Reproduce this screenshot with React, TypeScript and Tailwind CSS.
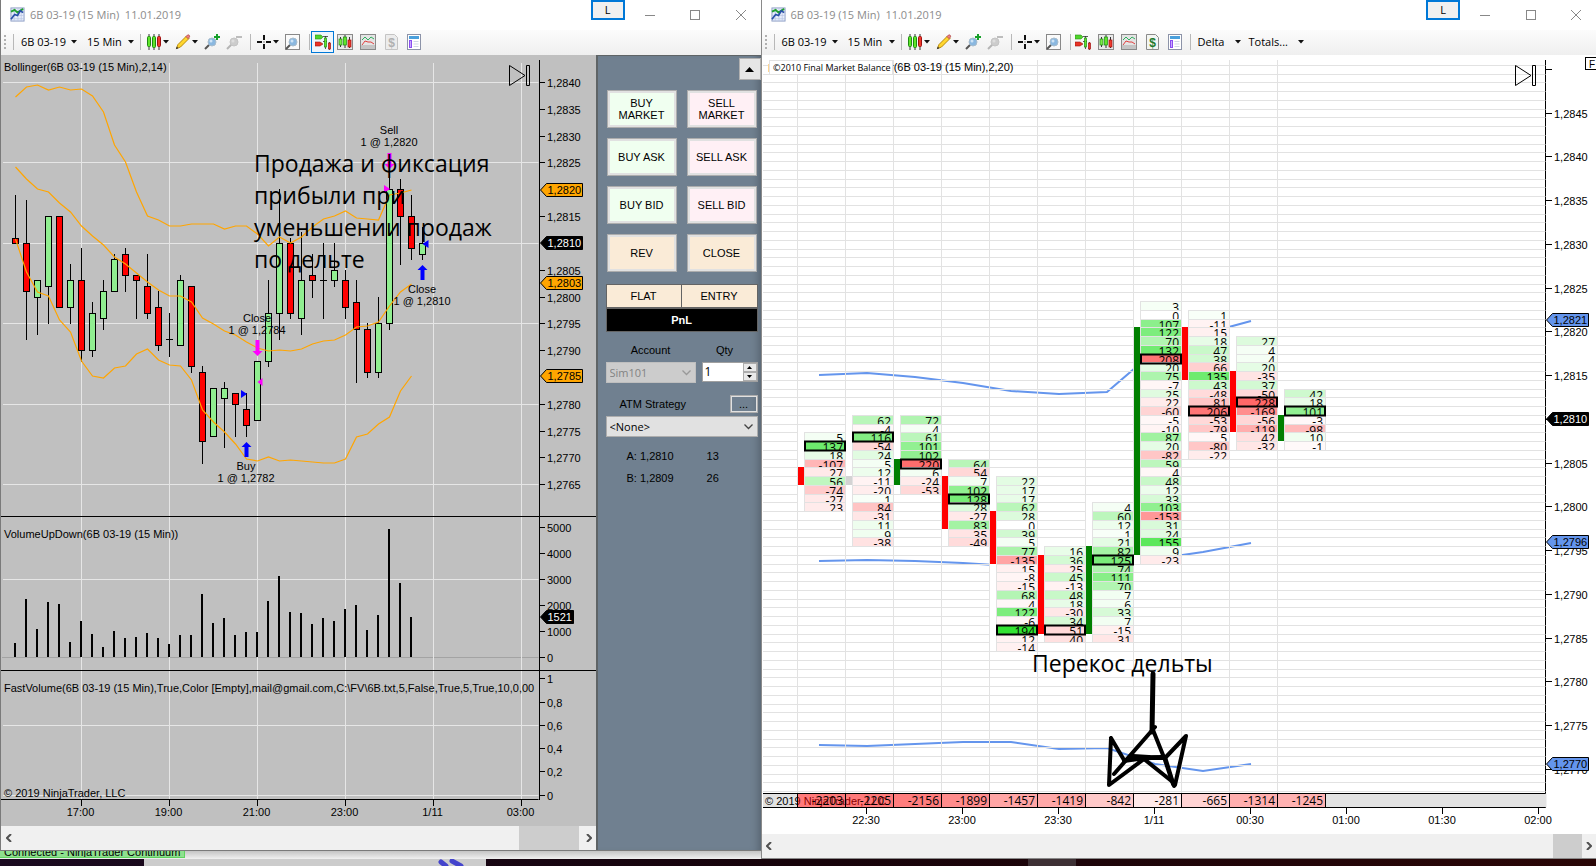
import type { ReactNode } from 'react'

const UI = "font-['Open_Sans','Noto_Sans',sans-serif]"

// [high, top, bottom, low, kind] in ticks (1,2840 = 2840)
type Candle = [number, number, number, number, 'g' | 'r']
const candles: Candle[] = [
  [2819, 2811, 2810, 2810, 'r'],
  [2818, 2810, 2801, 2792, 'r'],
  [2803, 2803, 2800, 2793, 'g'],
  [2815, 2815, 2802, 2795, 'g'],
  [2815, 2815, 2798, 2798, 'r'],
  [2806, 2803, 2798, 2795, 'g'],
  [2809, 2803, 2790, 2788, 'r'],
  [2799, 2797, 2790, 2789, 'g'],
  [2803, 2801, 2796, 2794, 'g'],
  [2808, 2807, 2801, 2801, 'g'],
  [2809, 2808, 2804, 2801, 'r'],
  [2804, 2804, 2803, 2796, 'r'],
  [2808, 2802, 2797, 2796, 'r'],
  [2801, 2798, 2791, 2790, 'r'],
  [2797, 2792, 2792, 2789, 'g'],
  [2804, 2803, 2791, 2791, 'g'],
  [2802, 2802, 2787, 2786, 'r'],
  [2787, 2786, 2773, 2769, 'r'],
  [2783, 2783, 2774, 2774, 'g'],
  [2784, 2783, 2781, 2772, 'g'],
  [2782, 2782, 2780, 2774, 'r'],
  [2782, 2779, 2776, 2774, 'r'],
  [2788, 2788, 2777, 2777, 'g'],
  [2803, 2797, 2788, 2787, 'g'],
  [2820, 2810, 2797, 2792, 'g'],
  [2811, 2810, 2797, 2796, 'r'],
  [2812, 2803, 2796, 2793, 'g'],
  [2808, 2804, 2803, 2800, 'r'],
  [2810, 2803, 2803, 2796, 'g'],
  [2810, 2805, 2803, 2802, 'g'],
  [2805, 2803, 2798, 2796, 'r'],
  [2803, 2799, 2794, 2784, 'r'],
  [2795, 2794, 2786, 2785, 'r'],
  [2800, 2795, 2786, 2785, 'g'],
  [2823, 2820, 2795, 2794, 'g'],
  [2822, 2820, 2815, 2806, 'r'],
  [2819, 2815, 2809, 2807, 'r'],
  [2813, 2810, 2808, 2807, 'g'],
]

const bands = [
  [97, 87, 85, 90, 87, 90, 89, 96, 112, 145, 162, 192, 216, 220, 226, 226, 224, 224, 224, 229, 226, 226, 234, 246, 237, 243, 237, 227, 219, 216, 211, 218, 219, 220, 195, 193, 190],
  [167, 179, 189, 192, 203, 212, 226, 236, 245, 257, 264, 273, 282, 290, 296, 296, 302, 318, 324, 331, 335, 342, 348, 351, 350, 351, 349, 344, 341, 340, 335, 327, 326, 322, 306, 292, 284],
  [239, 272, 292, 296, 320, 332, 361, 376, 378, 368, 366, 354, 349, 360, 365, 366, 380, 410, 422, 432, 444, 459, 461, 457, 461, 460, 461, 462, 463, 463, 459, 437, 434, 424, 417, 391, 376],
]

const volumes = [14, 58, 28, 55, 53, 15, 36, 23, 10, 26, 19, 20, 24, 19, 13, 22, 22, 63, 34, 39, 22, 25, 25, 56, 81, 45, 44, 33, 39, 36, 48, 52, 27, 42, 128, 74, 40]

// footprint columns: n = negative delta printed without sign, * = boxed level
type Column = { row: number; cells: string; bar: [number, number, string] }
const columns: Column[] = [
  { row: 42, cells: '5 137* 18 -107 n27 56 -74 -27 n23', bar: [46, 48, '#ff0000'] },
  { row: 40, cells: '62 -4 116* -54 24 5 12 -11 -20 1 n84 -31 11 9 -38', bar: [47, 48, '#d3d3d3'] },
  { row: 40, cells: '72 4 61 101 102 n220* 6 -24 -53', bar: [45, 48, '#008000'] },
  { row: 45, cells: '64 n54 7 102 128* 28 -27 83 n35 -49', bar: [47, 53, '#ff0000'] },
  { row: 47, cells: '22 17 17 62 28 0 39 5 77 -135 n15 -8 -15 68 n4 122 -6 194* n12 -14', bar: [51, 57, '#ff0000'] },
  { row: 55, cells: '16 36 n25 45 -13 48 18 -30 34 n51* n40', bar: [56, 65, '#ff0000'] },
  { row: 50, cells: '4 60 12 1 21 82 125* 74 111 70 7 6 33 7 -15 n31', bar: [55, 65, '#008000'] },
  { row: 27, cells: '3 0 107 122 70 132 n208* 20 75 -7 25 n22 -60 -5 -10 87 20 -82 59 n4 48 12 33 103 -153 31 24 155 9 -23', bar: [30, 56, '#008000'] },
  { row: 28, cells: '1 -11 n15 18 47 38 n66 135 43 -48 n81 n206* -53 -79 n5 -80 -22', bar: [30, 36, '#ff0000'] },
  { row: 31, cells: '27 4 4 20 -35 37 -50 n228* -169 -56 -119 n42 -32', bar: [35, 42, '#ff0000'] },
  { row: 37, cells: '42 18 101* -3 -98 10 -1', bar: [40, 43, '#008000'] },
]

const totals = [2203, 2205, 2156, 1899, 1457, 1419, 842, 281, 665, 1314, 1245]

const blueBands = [
  [375, 373, 377, 383, 391, 394, 392, 351, 334, 321],
  [561, 560, 561, 563, 566, 569, 568, 559, 552, 543],
  [745, 746, 744, 742, 742, 749, 748, 764, 771, 764],
]

const priceY = (p: number) => Math.round(82 + (2840 - p) * 5.363)
const rowY = (k: number) => Math.round(65 + k * 8.747)
const priceLabel = (p: number) => `1,${p}`

function cellColor(v: number, negative: boolean) {
  if (v === 0) return '#ffffff'
  if (negative) {
    const c = Math.round(250 - v * 0.64)
    return `rgb(255,${c},${c})`
  }
  const c = Math.round(249 - v * 1.02)
  return `rgb(${c},${Math.round(255 - v * 0.15)},${c})`
}

/* ---------- icons ---------- */

function Icon({ children, size = 16 }: { children: ReactNode; size?: number }) {
  return (
    <svg width={size} height={size} viewBox="0 0 16 16" fill="none" aria-hidden="true">
      {children}
    </svg>
  )
}

const Caret = () => (
  <svg width="7" height="4" viewBox="0 0 7 4" aria-hidden="true">
    <path d="M1 0h6L4 3.500z" fill="#111" />
  </svg>
)

const AppIcon = () => (
  <Icon size={15}>
    <rect x="1" y="1" width="14" height="14" fill="#e8eefb" stroke="#8b9cc4" />
    <path d="M4.5 1v14M8.5 1v14M12 1v14M1 5h14M1 9h14M1 12.5h14" stroke="#b5c2e2" strokeWidth=".7" />
    <path d="M1 5l4-2 3 3 6-4" stroke="#22a030" strokeWidth="2" />
    <path d="M1 13l4-5 3 1 3-5 3 2" stroke="#2a50a8" strokeWidth="1.8" />
  </Icon>
)

const CandlesIcon = () => (
  <Icon>
    <path d="M3 0v16M8 0v16M13 0v16" stroke="#333" />
    <rect x="1.5" y="2.5" width="3" height="10" rx="1" fill="#5fe62a" stroke="#1f8a12" />
    <rect x="6.5" y="2.5" width="3" height="11" rx="1" fill="#5fe62a" stroke="#1f8a12" />
    <rect x="11.5" y="2.5" width="3" height="10" rx="1" fill="#ee3a2c" stroke="#a01010" />
  </Icon>
)

const PencilIcon = () => (
  <Icon>
    <path d="M1.5 14.5l1.5-4 8.5-8.5 2.5 2.5-8.5 8.5z" fill="#ffd62e" stroke="#b98a08" />
    <path d="M11 2.5l1.5-1.5a1.5 1.5 0 012 2L13 4.7z" fill="#f08080" stroke="#b04a4a" strokeWidth=".8" />
    <path d="M.8 15.2l1-2.6 1.6 1.6z" fill="#333" />
  </Icon>
)

const Lens = ({ off }: { off?: boolean }) => (
  <>
    <path d="M5.5 10.5L1 15" stroke={off ? '#b5b5b5' : '#555'} strokeWidth="2" />
    <circle cx="8" cy="8" r="4" fill={off ? '#cccccc' : '#8ab8e0'} stroke={off ? '#c4c4c4' : '#a8bccc'} />
    <circle cx="7" cy="7" r="1.5" fill={off ? '#dedede' : '#cfe4f6'} />
  </>
)

const ZoomInIcon = () => (
  <Icon>
    <Lens />
    <path d="M13 0v6M10 3h6" stroke="#17a02a" strokeWidth="2" />
  </Icon>
)

const ZoomOutIcon = () => (
  <Icon>
    <Lens off />
    <path d="M10 3h6" stroke="#bdbdbd" strokeWidth="2" />
  </Icon>
)

const CrossIcon = () => (
  <Icon>
    <path d="M8 1v5M8 10v5M1 8h5M10 8h5" stroke="#111" strokeWidth="2" />
    <path d="M7.5 8h1" stroke="#111" />
  </Icon>
)

const FrameZoomIcon = () => (
  <Icon>
    <rect x=".5" y=".5" width="14" height="15" fill="#fafafa" stroke="#888" />
    <Lens />
  </Icon>
)

const TraderIcon = () => (
  <Icon>
    <path d="M0 1h6l2 2-2 2H0z" fill="#4fd42a" stroke="#2b8f18" strokeWidth=".6" />
    <path d="M0 8h5l3 2-3 2H0z" fill="#e83224" stroke="#a01510" strokeWidth=".6" />
    <path d="M8 2.500h5M8 7.500h4M10.500 2v13M14.500 8v8" stroke="#333" strokeWidth=".8" />
    <rect x="9.500" y="4" width="2" height="9" fill="#5fe62a" stroke="#1f8a12" strokeWidth=".7" />
    <rect x="13.500" y="9" width="2" height="6" fill="#ee3a2c" stroke="#a01010" strokeWidth=".7" />
  </Icon>
)

const BoxCandlesIcon = () => (
  <Icon>
    <rect x=".5" y=".5" width="15" height="15" fill="#e9e9e9" stroke="#8a8a8a" />
    <path d="M3.500 3v10M8 1v13M12.500 3v11" stroke="#333" />
    <rect x="2" y="5" width="3" height="6" fill="#7de84a" stroke="#1f8a12" strokeWidth=".7" />
    <rect x="6.500" y="3" width="3" height="8" fill="#5fe62a" stroke="#1f8a12" strokeWidth=".7" />
    <rect x="11" y="6" width="3" height="7" fill="#ee3a2c" stroke="#a01010" strokeWidth=".7" />
  </Icon>
)

const LinesIcon = () => (
  <Icon>
    <rect x=".5" y=".5" width="15" height="15" fill="#e4e4e4" stroke="#8a8a8a" />
    <path d="M1 11h14v4H1z" fill="#c4c4c4" />
    <path d="M2 6l3-3 3 3 3-3 3 2" stroke="#30b060" />
    <path d="M2 11l3-4 3 1 3 0 3 2" stroke="#e04040" />
  </Icon>
)

const DollarIcon = ({ off }: { off?: boolean }) => (
  <Icon>
    <path d="M2.500.500h9l3 3v12h-12z" fill={off ? '#ececec' : '#f2f5f2'} stroke={off ? '#c4c4c4' : '#8a8a8a'} />
    <text x="8.500" y="12.500" textAnchor="middle" fontSize="12" fontWeight="bold" fontFamily="Liberation Sans, sans-serif" fill={off ? '#b0b0b0' : '#1f7a2c'}>$</text>
  </Icon>
)

const LayoutIcon = () => (
  <Icon>
    <rect x="1.500" y=".500" width="13" height="15" fill="#fff" stroke="#8c93a8" />
    <rect x="3" y="2" width="10" height="3" fill="#4aa0dc" />
    <rect x="3.500" y="6.500" width="2" height="7" fill="#c9a8ff" stroke="#8a4df0" />
    <path d="M7.500 7.500h5M7.500 10h5M7.500 12.500h5" stroke="#cfd6e4" />
  </Icon>
)

/* ---------- window chrome ---------- */

function TitleBar() {
  return (
    <header className="flex h-[30px] shrink-0 items-center bg-white pb-px pl-[9px]">
      <AppIcon />
      <h1 className={`ml-[5px] flex-1 whitespace-pre text-[11px] leading-4 text-[#8c8c8c] ${UI}`}>6B 03-19 (15 Min)  11.01.2019</h1>
      <button className={`h-5 w-[34px] self-start border-2 border-[#0078d7] bg-[#f0f0f0] text-[11px] leading-4 text-black ${UI}`}>L</button>
      <button aria-label="Minimize" className="ml-0.5 flex h-7 w-[46px] items-center justify-center">
        <svg width="10" height="10"><path d="M0 5.500h10" stroke="#888" /></svg>
      </button>
      <button aria-label="Maximize" className="flex h-7 w-[45px] items-center justify-center">
        <svg width="10" height="10"><rect x=".500" y=".500" width="9" height="9" fill="none" stroke="#888" /></svg>
      </button>
      <button aria-label="Close" className="ml-[3px] flex h-7 w-10 items-center justify-center">
        <svg width="10" height="10"><path d="M0 0l10 10M10 0L0 10" stroke="#888" /></svg>
      </button>
    </header>
  )
}

const Separator = () => <span className="h-4 w-px shrink-0 bg-[#b8b8b8]" />

function Tool({ label, children, caret }: { label: string; children: ReactNode; caret?: boolean }) {
  return (
    <button aria-label={label} className="flex shrink-0 items-center">
      {children}
      {caret && <Caret />}
    </button>
  )
}

function Toolbar({ delta }: { delta?: boolean }) {
  return (
    <div className={`flex h-[25px] shrink-0 items-center bg-gradient-to-b from-[#fcfcfc] to-[#efefef] pb-px pl-[3px] text-[11px] leading-4 text-black ${UI}`}>
      <svg width="3" height="16" className="mr-1.5 shrink-0">
        <path d="M1 1v15" stroke="#b0b0b0" strokeWidth="2" strokeDasharray="2 2" />
      </svg>
      <Separator />
      <button className="ml-[7px] flex w-14 shrink-0 items-center justify-between whitespace-nowrap">6B 03-19<Caret /></button>
      <button className="ml-[10px] flex w-[47px] shrink-0 items-center justify-between whitespace-nowrap">15 Min<Caret /></button>
      <span className="w-[6px]" />
      <Separator />
      <div className="ml-[5px] mr-2 flex items-center gap-[6px]">
        <Tool label="Chart style" caret><CandlesIcon /></Tool>
        <Tool label="Drawing tools" caret><PencilIcon /></Tool>
        <Tool label="Zoom in"><ZoomInIcon /></Tool>
        <Tool label="Zoom out"><ZoomOutIcon /></Tool>
      </div>
      <Separator />
      <div className="ml-[5px] mr-2 flex items-center gap-[6px]">
        <Tool label="Cross hair" caret><CrossIcon /></Tool>
        <Tool label="Zoom frame"><FrameZoomIcon /></Tool>
      </div>
      <Separator />
      <button
        aria-label="Chart trader"
        className={`ml-px flex h-[22px] w-[23px] shrink-0 items-center justify-center ${delta ? '' : 'border border-[#0078d7] bg-[#eef5fc]'}`}
      >
        <TraderIcon />
      </button>
      <div className="ml-[3px] flex items-center gap-[7px]">
        <Tool label="Data series"><BoxCandlesIcon /></Tool>
        <Tool label="Indicators"><LinesIcon /></Tool>
        <Tool label="Strategies"><DollarIcon off={!delta} /></Tool>
        <Tool label="Properties"><LayoutIcon /></Tool>
        {delta && <Separator />}
      </div>
      {delta && (
        <>
          <button className="ml-[7px] flex w-[43px] shrink-0 items-center justify-between">Delta<Caret /></button>
          <button className="ml-2 flex w-[55px] shrink-0 items-center justify-between">Totals...<Caret /></button>
        </>
      )}
    </div>
  )
}

function ScrollBar({ thumb }: { thumb: ReactNode }) {
  return (
    <div className="flex h-6 shrink-0 items-center bg-[#f0f0f0]">
      <button aria-label="Scroll left" className="flex h-full w-[15px] items-center justify-center">
        <svg width="6" height="8"><path d="M5 0L1 4l4 4" fill="none" stroke="#505050" strokeWidth="2" /></svg>
      </button>
      <div className="flex h-full flex-1 justify-end">{thumb}</div>
      <button aria-label="Scroll right" className="flex h-full w-[14px] items-center justify-center">
        <svg width="6" height="8"><path d="M1 0l4 4-4 4" fill="none" stroke="#505050" strokeWidth="2" /></svg>
      </button>
    </div>
  )
}

function JumpButton({ className }: { className: string }) {
  return (
    <button aria-label="Go to last bar" className={`absolute top-[10px] ${className}`}>
      <svg width="22" height="22" fill="none" stroke="#000">
        <path d="M.5 .5v20L16 10.500z" />
        <path d="M17.500 .5h3v20h-3z" />
      </svg>
    </button>
  )
}

function PriceTag({ x, y, text, fill, color = '#000' }: { x: number; y: number; text: string; fill: string; color?: string }) {
  const w = text.length > 4 ? 42 : 33
  return (
    <g>
      <path d={`M${x} ${y}l6 -6.500h${w - 6}v13h-${w - 6}z`} fill={fill} stroke="#000" />
      <text x={x + 7} y={y + 4} fill={color}>{text}</text>
    </g>
  )
}

/* ---------- left chart ---------- */

const Up = ({ x, y }: { x: number; y: number }) => (
  <path d={`M${x} ${y}l5 5h-3v10h-4v-10h-3z`} fill="#0000ff" />
)
const Down = ({ x, y }: { x: number; y: number }) => (
  <path d={`M${x} ${y}l-5 -5h3v-11h4v11h3z`} fill="#ff00ff" />
)

function PricePlot() {
  const hours = ['17:00', '19:00', '21:00', '23:00', '1/11', '03:00']
  return (
    <svg className="block h-full w-full" fontFamily="Liberation Sans, Arial, sans-serif" fontSize="11">
      {[82, 162, 243, 323, 404, 484, 579, 725, 795].map(y => (
        <line key={y} x1="2" x2="100%" y1={y - 54.5} y2={y - 54.5} stroke="#e6e6e6" />
      ))}
      <line x1="1" x2="100%" y1="602.5" y2="602.5" stroke="#a3a3a3" />
      {[461.5, 615.5, 744.5].map(y => (
        <line key={y} x1="0" x2="100%" y1={y} y2={y} stroke="#000" />
      ))}
      <g transform="translate(-1 -55)">
        {hours.map((h, i) => {
          const x = 81.5 + i * 88
          return (
            <g key={h}>
              <line x1={x} x2={x} y1="63" y2="799" stroke="#e6e6e6" />
              <line x1={x} x2={x} y1="799" y2="806" stroke="#000" />
              <text x={x - 1} y="816" textAnchor="middle">{h}</text>
            </g>
          )
        })}
        <path d="M1 516.5h540M1 670.5h540" stroke="#000" />
        {candles.map(([high, top, bottom, low, kind], i) => {
          const x = 15 + i * 11
          return (
            <g key={i} stroke="#000">
              <line x1={x + 0.5} x2={x + 0.5} y1={priceY(high)} y2={priceY(low) + 1} />
              {top === bottom ? (
                <line x1={x - 3} x2={x + 4} y1={priceY(top) + 0.5} y2={priceY(top) + 0.5} />
              ) : (
                <rect
                  x={x - 2.5}
                  y={priceY(top) + 0.5}
                  width="6"
                  height={priceY(bottom) - priceY(top)}
                  fill={kind === 'g' ? '#90ee90' : '#ff0000'}
                />
              )}
            </g>
          )
        })}
        {bands.map((band, i) => (
          <polyline key={i} points={band.map((y, k) => `${15.5 + k * 11},${y}`).join(' ')} fill="none" stroke="#ffa500" strokeWidth="1.2" />
        ))}
        {volumes.map((h, i) => (
          <rect key={i} x={14 + i * 11} y={657 - h} width="2" height={h} />
        ))}

        <Down x={257.5} y={356} />
        <Down x={389.5} y={169} />
        <Up x={246.5} y={442} />
        <Up x={422.5} y={265} />
        <path d="M241 390v8l6-4zM428.500 240v8l-6-4z" fill="#0000ff" />
        <path d="M262.500 378v8l-5-4zM384 185v8l6-4z" fill="#ff00ff" />

        <g textAnchor="middle">
          <text x="257" y="322">Close</text>
          <text x="257" y="334">1 @ 1,2784</text>
          <text x="246" y="470">Buy</text>
          <text x="246" y="482">1 @ 1,2782</text>
          <text x="389" y="134">Sell</text>
          <text x="389" y="146">1 @ 1,2820</text>
          <text x="422" y="293">Close</text>
          <text x="422" y="305">1 @ 1,2810</text>
        </g>
        <text x="4" y="71">Bollinger(6B 03-19 (15 Min),2,14)</text>
        <text x="4" y="538">VolumeUpDown(6B 03-19 (15 Min))</text>
        <text x="4" y="692">{'FastVolume(6B 03-19 (15 Min),True,Color [Empty],mail@gmail.com,C:\\FV\\6B.txt,5,False,True,5,True,10,0,00'}</text>
        <text x="4" y="797">© 2019 NinjaTrader, LLC</text>
        <g fontFamily="Open Sans, Noto Sans, sans-serif" fontSize="23">
          <text x="254" y="172">Продажа и фиксация</text>
          <text x="254" y="204">прибыли при</text>
          <text x="254" y="236">уменьшении продаж</text>
          <text x="254" y="268">по дельте</text>
        </g>
      </g>
    </svg>
  )
}

function PriceAxis() {
  const prices = Array.from({ length: 16 }, (_, i) => 2840 - i * 5).filter(p => ![2820, 2810, 2785].includes(p))
  const scale: [number, string][] = [
    ...prices.map((p): [number, string] => [priceY(p), priceLabel(p)]),
    [527, '5000'], [553, '4000'], [579, '3000'], [605, '2000'], [631, '1000'], [657, '0'],
    [678, '1'], [702, '0,8'], [725, '0,6'], [748, '0,4'], [771, '0,2'], [795, '0'],
  ]
  return (
    <svg className="block h-full w-[57px] shrink-0" fontFamily="Liberation Sans, Arial, sans-serif" fontSize="11">
      <g transform="translate(-539 -55)">
        <path d="M539.500 60v740M539 516.500h57M539 670.500h57" stroke="#000" />
        {scale.map(([y, label]) => (
          <g key={y}>
            <line x1="539" x2="545" y1={y + 0.5} y2={y + 0.5} stroke="#000" />
            <text x="547" y={y + 5}>{label}</text>
          </g>
        ))}
        <PriceTag x={540.5} y={190} text="1,2820" fill="#ffa500" />
        <PriceTag x={540.5} y={243} text="1,2810" fill="#000" color="#fff" />
        <PriceTag x={540.5} y={283} text="1,2803" fill="#ffa500" />
        <PriceTag x={540.5} y={376} text="1,2785" fill="#ffa500" />
        <PriceTag x={540.5} y={617} text="1521" fill="#000" color="#fff" />
      </g>
    </svg>
  )
}

/* ---------- order panel ---------- */

const orders = [
  ['BUY MARKET', 'bg-[#f0fff0]'],
  ['SELL MARKET', 'bg-[#fff0f5]'],
  ['BUY ASK', 'bg-[#f0fff0]'],
  ['SELL ASK', 'bg-[#fff0f5]'],
  ['BUY BID', 'bg-[#f0fff0]'],
  ['SELL BID', 'bg-[#fff0f5]'],
  ['REV', 'bg-[#faebd7]'],
  ['CLOSE', 'bg-[#faebd7]'],
]

const Chevron = ({ color }: { color: string }) => (
  <svg width="9" height="6" className="pointer-events-none absolute right-[5px] top-2">
    <path d="M.5 .5l4 4 4-4" fill="none" stroke={color} strokeWidth="1.3" />
  </svg>
)

function OrderPanel() {
  return (
    <aside className="flex w-[165px] shrink-0 flex-col border-l-2 border-t border-[#5f6466] bg-[#708090] pr-[3px] pl-[8px] text-[11px] leading-3 text-black shadow-[inset_-8px_0_8px_-6px_rgba(0,0,0,0.25)] font-['Liberation_Sans',Arial,sans-serif]">
      <button aria-label="Collapse" className="mt-[2px] mr-[-3px] flex h-[22px] w-[22px] items-center justify-center self-end border border-[#b0b0b0] bg-[#e6e6e6]">
        <svg width="9" height="5"><path d="M0 5h9L4.500 0z" /></svg>
      </button>
      <div className="mt-[10px] mx-px grid grid-cols-2 gap-[10px]">
        {orders.map(([label, bg]) => (
          <button key={label} className="h-[38px] border border-[#adadad] bg-[#e1e1e1] p-[2px]">
            <span className={`flex h-full items-center justify-center px-1 ${bg}`}>{label}</span>
          </button>
        ))}
      </div>
      <div className="mt-3 border border-[#646464]">
        <div className="grid grid-cols-2 bg-[#faebd7] text-center leading-[22px]">
          <span className="border-r border-[#646464]">FLAT</span>
          <span>ENTRY</span>
        </div>
        <div className="border-t-2 border-[#646464] bg-black text-center font-bold leading-[22px] text-white">PnL</div>
      </div>
      <div className="mt-3 flex h-3 items-center">
        <label htmlFor="account" className="w-[90px] text-center">Account</label>
        <label htmlFor="qty" className="flex-1 pr-1 text-center">Qty</label>
      </div>
      <div className="mt-[6px] flex h-[21px] gap-[6px]">
        <div className="relative w-[90px]">
          <select id="account" disabled className={`h-[21px] w-full appearance-none border border-[#bfbfbf] bg-[#cccccc] pl-[3px] text-[11px] leading-[18px] text-[#838383] opacity-100 ${UI}`}>
            <option>Sim101</option>
          </select>
          <Chevron color="#999" />
        </div>
        <div className="flex h-5 flex-1 border border-[#a0a0a0] bg-white">
          <input id="qty" defaultValue="1" className={`w-0 flex-1 pl-[2px] pb-[2px] text-[12px] outline-none ${UI}`} />
          <div className="flex w-[14px] flex-col">
            <button aria-label="More" className="flex flex-1 items-center justify-center border border-[#adadad] bg-[#e9e9e9]">
              <svg width="5" height="3"><path d="M0 3h5L2.500 0z" /></svg>
            </button>
            <button aria-label="Less" className="flex flex-1 items-center justify-center border border-[#adadad] bg-[#e9e9e9]">
              <svg width="5" height="3"><path d="M0 0h5L2.500 3z" /></svg>
            </button>
          </div>
        </div>
      </div>
      <div className="mt-3 flex items-center">
        <label htmlFor="atm" className="flex-1 pl-[14px]">ATM Strategy</label>
        <button className="flex h-[18px] w-7 items-center justify-center border-2 border-[#e1e1e1] outline outline-1 -outline-offset-1 outline-[#adadad]">...</button>
      </div>
      <div className="relative mt-[3px]">
        <select id="atm" className={`h-[21px] w-full appearance-none border border-[#adadad] bg-[#e1e1e1] pl-[3px] text-[11px] leading-[18px] ${UI}`}>
          <option>&lt;None&gt;</option>
        </select>
        <Chevron color="#444" />
      </div>
      <dl className="mt-[13px] grid grid-cols-[80px_1fr] gap-y-[10px] pl-[21px]">
        <dt>A: 1,2810</dt>
        <dd>13</dd>
        <dt>B: 1,2809</dt>
        <dd>26</dd>
      </dl>
    </aside>
  )
}

/* ---------- right chart ---------- */

function FootprintColumn({ column, index }: { column: Column; index: number }) {
  const x = 797 + index * 48
  const cells = column.cells.split(' ')
  const [from, to, color] = column.bar
  const top = rowY(column.row)
  const end = rowY(column.row + cells.length)
  return (
    <g>
      <rect x={x + 1} y={top} width="6" height={end - top} fill="#fff" />
      {cells.map((cell, i) => {
        const y = rowY(column.row + i)
        const h = rowY(column.row + i + 1) - y
        const negative = cell[0] === '-' || cell[0] === 'n'
        const text = cell.replace(/[n*]/g, '')
        return (
          <g key={i}>
            <rect x={x + 7} y={y} width="42" height={h + 1} fill="#e2e2e2" />
            <rect x={x + 8} y={y + 1} width="40" height={h - 1} fill={cellColor(Math.abs(Number(text)), negative)} />
            <svg x={x + 8} y={y} width="40" height={h} overflow="hidden">
              <text x="38" y="11" textAnchor="end">{text}</text>
            </svg>
          </g>
        )
      })}
      {cells.map((cell, i) =>
        cell.endsWith('*') ? (
          <rect key={i} x={x + 8} y={rowY(column.row + i) + 0.5} width="40" height="9" fill="none" stroke="#000" strokeWidth="2" />
        ) : null
      )}
      <rect x={x + 1} y={rowY(from)} width="6" height={rowY(to) - rowY(from)} fill={color} />
    </g>
  )
}

function FootprintPlot() {
  const times = ['22:30', '23:00', '23:30', '1/11', '00:30', '01:00', '01:30', '02:00']
  return (
    <svg className="block h-full w-full overflow-visible" fontFamily="Liberation Sans, Arial, sans-serif" fontSize="11">
      <g transform="translate(-762 -55)">
        {blueBands.map((band, i) => (
          <polyline key={i} points={band.map((y, k) => `${819 + k * 48},${y}`).join(' ')} fill="none" stroke="#6495ed" strokeWidth="2" />
        ))}
        {Array.from({ length: 11 }, (_, i) => (
          <line key={i} x1={797.5 + i * 48} x2={797.5 + i * 48} y1="60" y2="794" stroke="#e2e2e2" />
        ))}
      </g>
      {Array.from({ length: 84 }, (_, k) => (
        <line key={k} x1="1" x2="100%" y1={rowY(k) - 54.5} y2={rowY(k) - 54.5} stroke="#e2e2e2" />
      ))}
      <rect x="1" y="738.5" width="100%" height="14" fill="#e2e2e2" />
      <path d="M36 739h528v13H36z" fill="#fff" />
      <g transform="translate(-762 -55)">
        <text x="765" y="805">© 2019 NinjaTrader, LLC</text>
        <g fontFamily="Open Sans, Noto Sans, sans-serif" fontSize="12">
          {columns.map((column, i) => (
            <FootprintColumn key={i} column={column} index={i} />
          ))}
          {totals.map((v, i) => (
            <g key={i}>
              <rect x={797.5 + i * 48} y="793.5" width="48" height="14" fill={`rgba(255,0,0,${v / 4400 + 0.02})`} stroke="#000" />
              <text x={843 + i * 48} y="805" textAnchor="end">-{v}</text>
            </g>
          ))}
        </g>
        {times.map((t, i) => (
          <g key={t}>
            <line x1={866.5 + i * 96} x2={866.5 + i * 96} y1="808" y2="814" stroke="#000" />
            <text x={866 + i * 96} y="824" textAnchor="middle">{t}</text>
          </g>
        ))}
        <text x="890" y="71">r(6B 03-19 (15 Min),2,20)</text>
        <rect x="769.5" y="60.500" width="123" height="14" fill="#fff" stroke="#e2e2e2" />
        <path d="M768.500 64v8" stroke="#ffd591" />
        <text x="773" y="71" fontFamily="Open Sans, Noto Sans, sans-serif" fontSize="9">©2010 Final Market Balance</text>
        <text x="1032" y="672" fontFamily="Open Sans, Noto Sans, sans-serif" fontSize="23">Перекос дельты</text>
        <g fill="none" stroke="#000" strokeWidth="4" strokeLinecap="round" strokeLinejoin="round">
          <path d="M1153 674l-1 58" strokeWidth="5" />
          <path d="M1155 727L1114 774M1153 730l12 30 8 24" />
          <path d="M1111 738l-2 47 35-26 30 24 1 2 11-49-21 22-32-2-9 5 21-3M1111 738l13 22 41-3" />
          <path d="M1174 786l-9-29" />
        </g>
      </g>
      <line x1="1" x2="100%" y1="738.5" y2="738.5" stroke="#000" />
      <line x1="1" x2="100%" y1="752.5" y2="752.5" stroke="#000" />
    </svg>
  )
}

function FootprintAxis() {
  const prices = Array.from({ length: 17 }, (_, i) => 2850 - i * 5)
  return (
    <svg className="block h-full w-[51px] shrink-0" fontFamily="Liberation Sans, Arial, sans-serif" fontSize="11">
      <g transform="translate(-1545 -55)">
        <path d="M1545.500 60v748" stroke="#000" />
        {prices.map(p => {
          const y = rowY(2850 - p) + 4.5
          return (
            <g key={p}>
              <line x1="1545" x2="1552" y1={y} y2={y} stroke="#000" />
              {p !== 2850 && p !== 2810 && <text x="1554" y={y + 4}>{priceLabel(p)}</text>}
            </g>
          )
        })}
        <PriceTag x={1546.5} y={320} text="1,2821" fill="#6495ed" />
        <PriceTag x={1546.5} y={419} text="1,2810" fill="#000" color="#fff" />
        <PriceTag x={1546.5} y={542} text="1,2796" fill="#6495ed" />
        <PriceTag x={1546.5} y={764} text="1,2770" fill="#6495ed" />
        <rect x="1585.500" y="57.500" width="14" height="12" fill="#fff" stroke="#000" />
        <text x="1589" y="68" fontSize="10">F</text>
      </g>
    </svg>
  )
}

export default function App() {
  return (
    <main className="flex h-screen flex-col overflow-hidden bg-[#12040c]">
      <div className="flex min-h-0 flex-1">

        {/* PRICE WINDOW */}
        <div className="flex min-w-0 flex-[761] flex-col bg-[#e4e4e4]">
          <section className="flex min-h-0 flex-1 flex-col border-b border-l border-[#7a7a7a]">
            <TitleBar />
            <Toolbar />
            <div className="flex min-h-0 flex-1">
              <div className="flex min-w-0 flex-1 flex-col bg-[#c0c0c0]">
                <div className="flex min-h-0 flex-1">
                  <div className="relative min-w-0 flex-1">
                    <PricePlot />
                    <JumpButton className="right-[8px]" />
                  </div>
                  <PriceAxis />
                </div>
                <ScrollBar thumb={<div className="mr-[3px] h-full w-[60px] bg-[#cdcdcd]" />} />
              </div>
              <OrderPanel />
            </div>
          </section>
          <div className="flex h-2 shrink-0 items-start bg-gradient-to-b from-[#c4c4c4] to-[#f0f0f0]">
            <div className="flex h-[7px] items-end overflow-hidden border-b border-r border-[#5fd35f] bg-[#8ee08e] px-1 text-[11px] leading-[10px] font-['Liberation_Sans',Arial,sans-serif]">
              Connected - NinjaTrader Continuum
            </div>
          </div>
        </div>

        {/* DELTA WINDOW */}
        <section className="flex min-w-0 flex-[835] flex-col border-b border-l border-[#8a8a8a] bg-white">
          <TitleBar />
          <Toolbar delta />
          <div className="flex min-h-0 flex-1">
            <div className="relative min-w-0 flex-1">
              <FootprintPlot />
              <JumpButton className="right-[8px]" />
            </div>
            <FootprintAxis />
          </div>
          <ScrollBar thumb={<div className="h-full w-[29px] bg-[#cdcdcd]" />} />
        </section>
      </div>

      {/* TASKBAR */}
      <footer className="flex h-[7px] shrink-0 bg-gradient-to-r from-[#1a0a20] via-[#16030a] to-[#2a0606]">
        <div className="ml-[9%] flex w-[342px] justify-end bg-[#cccccc] pr-5">
          <svg width="28" height="7">
            <path d="M3 3l5 4M14 2l9 5" stroke="#4444cc" strokeWidth="5" strokeLinecap="round" />
          </svg>
        </div>
        <div className="ml-[34%] w-12 bg-[#3d3034]" />
      </footer>
    </main>
  )
}
